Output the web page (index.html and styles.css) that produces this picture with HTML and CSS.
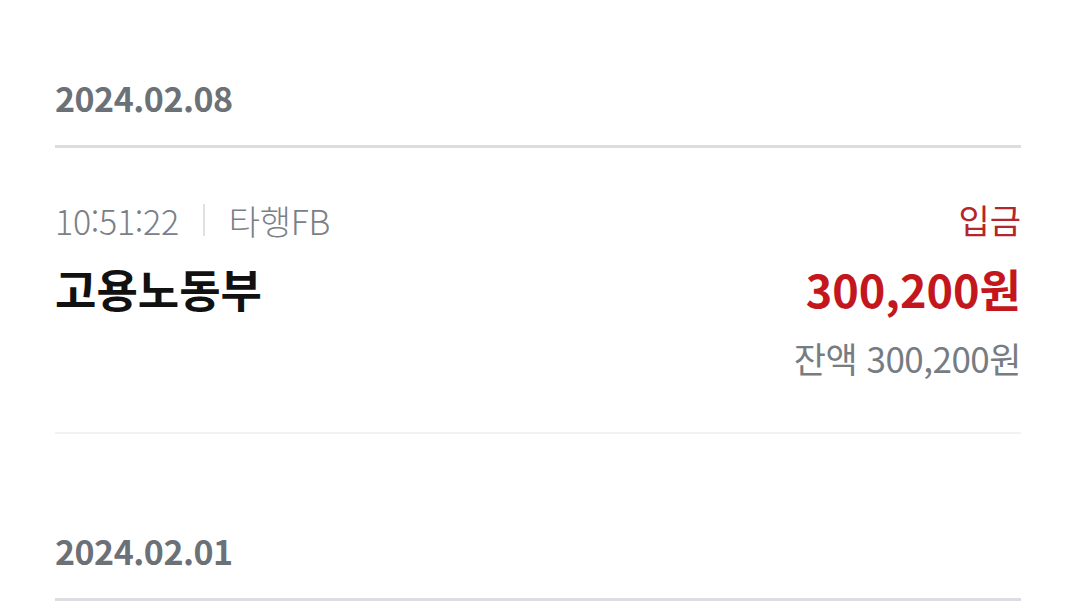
FILE: index.html
```html
<!DOCTYPE html>
<html lang="ko">
<head>
<meta charset="utf-8">
<link rel="stylesheet" href="styles.css">
</head>
<body>
<div class="list">
  <section class="day">
    <h2 class="day-date">2024.02.08</h2>
    <div class="tx">
      <div class="tx-left">
        <div class="tx-meta"><span class="tx-time">10:51:22</span><span class="tx-sep"></span><span class="tx-bank">타행FB</span></div>
        <div class="tx-title">고용노동부</div>
      </div>
      <div class="tx-right">
        <div class="tx-type">입금</div>
        <div class="tx-amount">300,200원</div>
        <div class="tx-balance">잔액 300,200원</div>
      </div>
    </div>
  </section>
  <section class="day">
    <h2 class="day-date">2024.02.01</h2>
  </section>
</div>
</body>
</html>
```
FILE: styles.css
```css
html, body {
  margin: 0;
  background: #ffffff;
}
body {
  font-family: "Noto Sans CJK KR", "Noto Sans", sans-serif;
}
.list {
  padding: 78px 57px 0 55px;
}
.day-date {
  margin: 0;
  font-size: 34px;
  line-height: 40px;
  font-weight: 700;
  color: #6b7177;
  letter-spacing: -0.5px;
  padding-bottom: 27px;
  border-bottom: 3px solid #dcdde0;
}
.day + .day {
  margin-top: 97px;
}
.tx {
  display: flex;
  justify-content: space-between;
  align-items: flex-start;
  padding: 52px 0 54px;
  border-bottom: 2px solid #f1f2f3;
}
.tx-left {
  display: flex;
  flex-direction: column;
  gap: 24px;
}
.tx-meta {
  display: flex;
  align-items: center;
  height: 40px;
  font-size: 34px;
  font-weight: 300;
  color: #7b8086;
  letter-spacing: -0.3px;
}
.tx-sep {
  width: 2px;
  height: 32px;
  background: #dfe2e5;
  margin: 0 24px 0 24px;
}
.tx-title {
  font-size: 45px;
  line-height: 50px;
  font-weight: 700;
  color: #111111;
}
.tx-right {
  display: flex;
  flex-direction: column;
  align-items: flex-end;
}
.tx-type {
  font-size: 34px;
  line-height: 40px;
  color: #b3262b;
}
.tx-amount {
  margin-top: 24px;
  font-size: 45px;
  line-height: 50px;
  font-weight: 700;
  color: #c3171d;
}
.tx-balance {
  margin-top: 24px;
  font-size: 35px;
  line-height: 40px;
  color: #777c82;
  letter-spacing: -0.5px;
}
```
